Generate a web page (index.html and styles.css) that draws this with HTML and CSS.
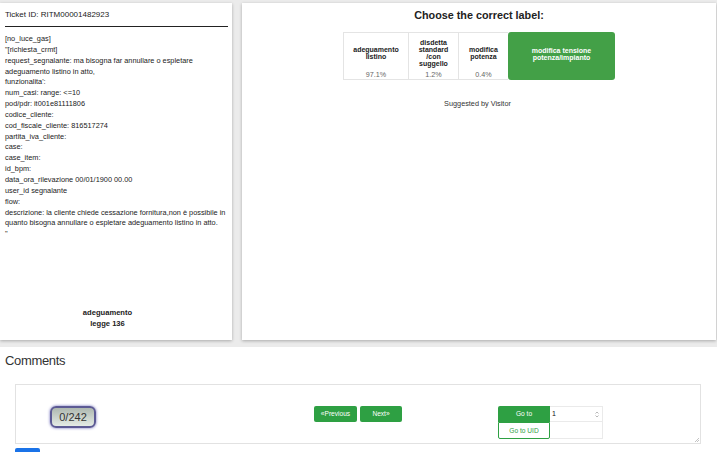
FILE: index.html
```html
<!DOCTYPE html>
<html>
<head>
<meta charset="utf-8">
<link rel="stylesheet" href="styles.css">
</head>
<body>
<div class="top">
  <div class="panel left">
    <div class="ticket">Ticket ID: RITM00001482923</div>
    <div class="rule"></div>
    <div class="body-text">
      <div>[no_luce_gas]</div>
      <div>"[richiesta_crmt]</div>
      <div>request_segnalante: ma bisogna far annullare o espletare</div>
      <div>adeguamento listino in atto,</div>
      <div>funzionalita':</div>
      <div>num_casi: range: &lt;=10</div>
      <div>pod/pdr: it001e81111806</div>
      <div>codice_cliente:</div>
      <div>cod_fiscale_cliente: 816517274</div>
      <div>partita_iva_cliente:</div>
      <div>case:</div>
      <div>case_item:</div>
      <div>id_bpm:</div>
      <div>data_ora_rilevazione 00/01/1900 00.00</div>
      <div>user_id segnalante</div>
      <div>flow:</div>
      <div>descrizione: la cliente chiede cessazione fornitura,non è possibile in</div>
      <div>quanto bisogna annullare o espletare adeguamento listino in atto.</div>
      <div>"</div>
    </div>
    <div class="category">adeguamento<br>legge 136</div>
  </div>
  <div class="panel right">
    <div class="title">Choose the correct label:</div>
    <div class="labels">
      <div class="label w1"><div class="lname">adeguamento<br>listino</div><div class="pct">97.1%</div></div>
      <div class="label w2"><div class="lname">disdetta<br>standard<br>/con<br>suggello</div><div class="pct">1.2%</div></div>
      <div class="label w3"><div class="lname">modifica<br>potenza</div><div class="pct">0.4%</div></div>
      <div class="label chosen"><div class="lname">modifica tensione<br>potenza/impianto</div></div>
    </div>
    <div class="suggested">Suggested by Visitor</div>
  </div>
</div>
<div class="comments">
  <div class="ctitle">Comments</div>
  <div class="cbox">
    <div class="counter">0/242</div>
    <div class="nav">
      <div class="btn prev">«Previous</div>
      <div class="btn next">Next»</div>
    </div>
    <div class="goto">
      <div class="btn gobtn">Go to</div>
      <div class="num"><span>1</span><span class="spin">
        <svg width="4" height="7" viewBox="0 0 4 7"><path d="M0.5 2.5 L2 1 L3.5 2.5 M0.5 4.5 L2 6 L3.5 4.5" fill="none" stroke="#999" stroke-width="0.7"/></svg>
      </span></div>
      <div class="btn uid">Go to UID</div>
      <div class="num empty"></div>
    </div>
    <svg class="grip" width="5" height="5" viewBox="0 0 5 5"><path d="M1 5 L5 1 M3 5 L5 3" stroke="#aaa" stroke-width="0.7"/></svg>
  </div>
  <div class="bluebtn"></div>
</div>
</body>
</html>
```
FILE: styles.css
```css
html, body {
  margin: 0;
  padding: 0;
}
body {
  background: #ebebeb;
  font-family: "Liberation Sans", Arial, sans-serif;
  color: #222;
  width: 717px;
  height: 452px;
  overflow: hidden;
}
.top {
  display: flex;
  gap: 10px;
  padding-top: 3px;
  height: 337px;
}
.panel {
  background: #fff;
  box-shadow: 0 1px 3px rgba(0,0,0,0.28);
  box-sizing: border-box;
}
.left {
  width: 232px;
  display: flex;
  flex-direction: column;
  padding: 7px 4px 0 5px;
}
.ticket {
  font-size: 8px;
  line-height: 10px;
}
.rule {
  height: 1px;
  background: #222;
  margin-top: 6px;
}
.body-text {
  margin-top: 7px;
  font-size: 7.35px;
  line-height: 10.85px;
  color: #222;
  white-space: nowrap;
}
.category {
  margin-top: auto;
  margin-bottom: 11px;
  padding-right: 18px;
  text-align: center;
  font-weight: bold;
  font-size: 7.6px;
  line-height: 10.5px;
}
.right {
  flex: 1;
  margin-right: 1px;
  display: flex;
  flex-direction: column;
  align-items: center;
}
.title {
  margin-top: 5px;
  font-weight: bold;
  font-size: 10.8px;
  line-height: 14px;
}
.labels {
  display: flex;
  margin-top: 10px;
  margin-right: 0;
  height: 48px;
}
.label {
  box-sizing: border-box;
  border: 1px solid #e4e4e4;
  border-right: none;
  display: flex;
  flex-direction: column;
  align-items: center;
  font-size: 7px;
}
.w1 { width: 65px; }
.w2 { width: 50px; }
.w3 { width: 50px; }
.lname {
  flex: 1;
  display: flex;
  align-items: center;
  text-align: center;
  font-weight: bold;
  line-height: 7px;
  color: #222;
  padding-top: 1px;
}
.pct {
  color: #666;
  font-size: 7.2px;
  line-height: 8px;
  margin-bottom: 0;
}
.chosen {
  width: 107px;
  background: #43a047;
  border: none;
  border-radius: 3px;
  color: #fff;
}
.chosen .lname {
  color: #fff;
  padding-top: 0;
  padding-bottom: 5px;
}
.suggested {
  margin-top: 19px;
  font-size: 7.3px;
  color: #333;
  margin-right: 3px;
}
.comments {
  margin-top: 7px;
  background: #fff;
  height: 108px;
}
.ctitle {
  padding: 6px 0 0 5px;
  font-size: 13px;
  line-height: 15px;
  letter-spacing: -0.35px;
  color: #333;
}
.cbox {
  margin: 16px 0 0 15px;
  width: 686px;
  height: 60px;
  box-sizing: border-box;
  border: 1px solid #e2e2e2;
  display: flex;
  align-items: flex-start;
  padding-top: 21px;
  position: relative;
}
.counter {
  margin-left: 34px;
  width: 46px;
  height: 22px;
  box-sizing: border-box;
  border: 2px solid #5c5a94;
  border-radius: 6px;
  background: linear-gradient(#aeb8b0, #e4ebe5);
  box-shadow: 0 0 3px #6a68b8;
  font-size: 11px;
  line-height: 18px;
  text-align: center;
  color: #333;
}
.nav {
  display: flex;
  gap: 3px;
  margin-left: 218px;
}
.btn {
  box-sizing: border-box;
  height: 16px;
  background: #2ea043;
  color: #fff;
  font-size: 6.6px;
  line-height: 16px;
  text-align: center;
  border-radius: 2px;
}
.prev { width: 43px; }
.next { width: 42px; }
.goto {
  margin-left: 96px;
  display: grid;
  grid-template-columns: 52px 53px;
  grid-template-rows: 16px 17px;
}
.gobtn {
  border-radius: 2px 0 0 0;
}
.num {
  box-sizing: border-box;
  border: 1px solid #eaeaea;
  border-left: none;
  font-size: 7px;
  line-height: 14px;
  padding-left: 2px;
  color: #111;
  display: flex;
  justify-content: space-between;
}
.spin {
  padding-right: 3px;
  display: flex;
  align-items: center;
}
.uid {
  height: 17px;
  background: #fff;
  color: #2ea043;
  border: 1px solid #2ea043;
  line-height: 15px;
  border-radius: 0 0 2px 2px;
}
.empty {
  border-top: none;
}
.grip {
  position: absolute;
  right: 1px;
  bottom: 1px;
}
.bluebtn {
  margin: 4px 0 0 15px;
  width: 25px;
  height: 6px;
  background: #1a73e8;
  border-radius: 2px 2px 0 0;
}
```
